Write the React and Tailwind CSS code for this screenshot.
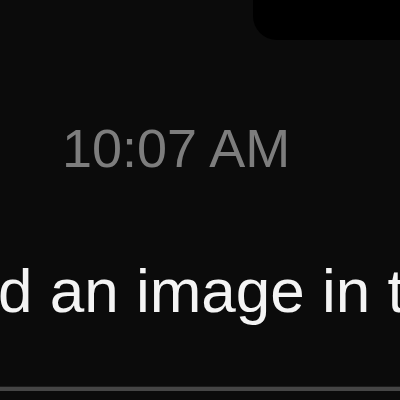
export default function App() {
  return (
    <div className="w-[400px] h-[400px] overflow-hidden bg-[#0b0b0b] flex flex-col font-['Liberation_Sans',Arial,sans-serif]">
      {/* previous bubble edge */}
      <div className="flex justify-end h-[40px] shrink-0">
        <div className="w-[147px] h-full bg-black rounded-bl-[24px]" />
      </div>

      {/* timestamp */}
      <div className="mt-[81px] pl-[62px] h-[54px] shrink-0 text-[54px] leading-none text-[#7d7d7d] whitespace-nowrap">
        10:07 AM
      </div>

      {/* message text */}
      <div className="mt-[85px] -ml-[2px] h-[62px] shrink-0 text-[62px] leading-none text-[#f4f4f4] whitespace-nowrap">
        d an image in t
      </div>

      {/* input divider */}
      <div className="mt-[64px] shrink-0 border-t border-[#1c1c1c] h-[5px] bg-[#454545]" />
    </div>
  );
}
